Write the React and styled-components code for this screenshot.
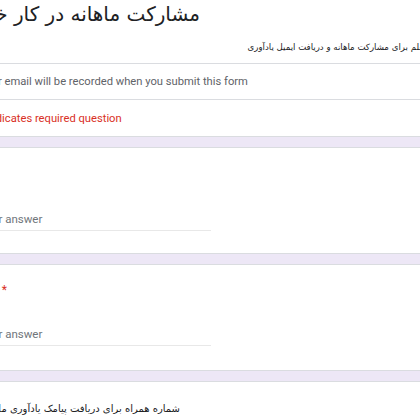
import React from "react";
import styled, { createGlobalStyle } from "styled-components";

const GlobalStyle = createGlobalStyle`
  html, body {
    margin: 0;
    padding: 0;
    width: 420px;
    height: 420px;
    overflow: hidden;
    background: #ede7f6;
  }
  body {
    font-family: Roboto, "DejaVu Sans", sans-serif;
  }
`;

const Page = styled.div`
  width: 512px;
  margin-left: -46px;
  display: flex;
  flex-direction: column;
  gap: 10px;
`;

const Card = styled.div`
  box-sizing: border-box;
  background: #fff;
  border: 1px solid #dadce0;
  border-radius: 8px;
  height: ${p => p.$height || "auto"};
  padding: ${p => p.$padding || "0"};
`;

const HeaderCard = styled(Card)`
  margin-top: -30px;
  padding-top: 27px;
`;

const HeaderTop = styled.div`
  padding: 0 24px 8px;
  border-bottom: 1px solid #dadce0;
`;

const Title = styled.div`
  width: 221px;
  font-family: "DejaVu Sans", sans-serif;
  font-size: 20px;
  line-height: 32px;
  height: 32px;
  color: #202124;
  white-space: nowrap;
  direction: rtl;
`;

const Description = styled.div`
  margin-top: 9px;
  width: 449px;
  font-family: "DejaVu Sans", sans-serif;
  font-size: 8.6px;
  line-height: 16px;
  color: #202124;
  white-space: nowrap;
  direction: rtl;
`;

const InfoRow = styled.div`
  padding: 0 24px;
  height: ${p => p.$height};
  display: flex;
  align-items: center;
  font-size: 11.2px;
  color: ${p => (p.$required ? "#d93025" : "#5f6368")};
  border-top: ${p => (p.$first ? "none" : "1px solid #dadce0")};
`;

const QuestionTitle = styled.div`
  font-family: "DejaVu Sans", sans-serif;
  font-size: ${p => p.$size || "14px"};
  line-height: 20px;
  height: 20px;
  color: #202124;
  white-space: nowrap;
  width: ${p => p.$width || "auto"};
  direction: ${p => (p.$rtl ? "rtl" : "ltr")};
`;

const Star = styled.span`
  color: #d93025;
  font-family: Roboto, sans-serif;
  font-size: 12px;
  margin-left: 6px;
`;

const AnswerField = styled.div`
  margin-top: 25px;
  width: 232px;
  font-size: 11.5px;
  line-height: 20px;
  padding-bottom: 1px;
  color: #70757a;
  border-bottom: 1px solid #e8e8e8;
`;

export default function App() {
  return (
    <>
      <GlobalStyle />
      <Page>
        <HeaderCard>
          <HeaderTop>
            <Title>مشارکت ماهانه در کار خیر</Title>
            <Description>معلم برای مشارکت ماهانه و دریافت ایمیل یادآوری</Description>
          </HeaderTop>
          <InfoRow $first $height="35px">
            Your email will be recorded when you submit this form
          </InfoRow>
          <InfoRow $required $height="36px">
            * Indicates required question
          </InfoRow>
        </HeaderCard>
        <Card $height="107px" $padding="16px 24px 0">
          <QuestionTitle>نام</QuestionTitle>
          <AnswerField>Your answer</AnswerField>
        </Card>
        <Card $height="107px" $padding="14px 24px 0">
          <QuestionTitle>
            نام<Star>*</Star>
          </QuestionTitle>
          <AnswerField>Your answer</AnswerField>
        </Card>
        <Card $height="107px" $padding="17px 24px 0">
          <QuestionTitle $rtl $width="201px" $size="10px">
            شماره همراه برای دریافت پیامک یادآوری ماهانه
          </QuestionTitle>
        </Card>
      </Page>
    </>
  );
}
